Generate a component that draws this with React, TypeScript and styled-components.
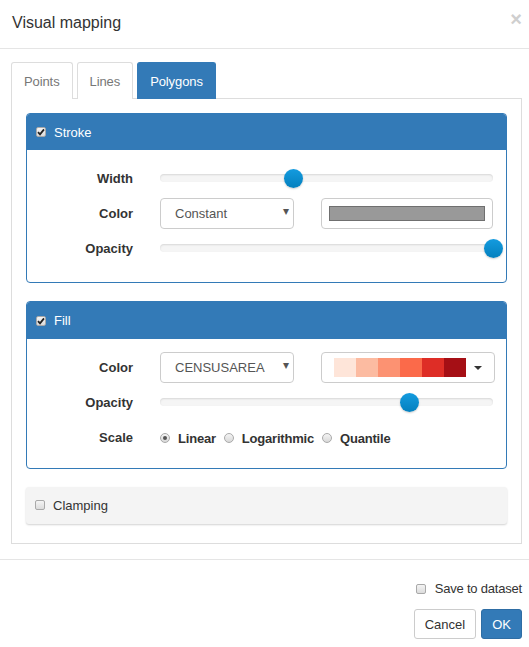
import React, { useState } from "react";
import styled, { createGlobalStyle, css } from "styled-components";

const GlobalStyle = createGlobalStyle`
  html, body {
    margin: 0;
    padding: 0;
    background: #fff;
    font-family: "Liberation Sans", Arial, Helvetica, sans-serif;
    font-size: 13px;
    color: #333;
  }
  * { box-sizing: border-box; }
`;

const ramp = ["#fee5d9", "#fcbba1", "#fc9272", "#fb6a4a", "#de2d26", "#a50f15"];

const Check = ({ checked }: { checked?: boolean }) => (
  <CheckBox>
    {checked && (
      <svg width="8" height="8" viewBox="0 0 8 8">
        <path d="M1 4.2 L3 6.4 L7 1.4" fill="none" stroke="#222" strokeWidth="1.8" />
      </svg>
    )}
  </CheckBox>
);

const Slider = ({ value }: { value: number }) => (
  <Track>
    <Thumb style={{ left: `${value * 100}%` }} />
  </Track>
);

const App = () => {
  const [tab, setTab] = useState("Polygons");
  const [scale, setScale] = useState("Linear");

  return (
    <Modal>
      <GlobalStyle />
      <Header>
        <Title>Visual mapping</Title>
        <Close>×</Close>
      </Header>
      <Body>
        <Tabs>
          {["Points", "Lines", "Polygons"].map((t) => (
            <Tab key={t} $active={tab === t} onClick={() => setTab(t)}>
              {t}
            </Tab>
          ))}
        </Tabs>
        <TabContent>
          <Panel>
            <PanelHeading>
              <Check checked />
              Stroke
            </PanelHeading>
            <PanelBody $pb={19}>
              <Row>
                <Label>Width</Label>
                <Slider value={0.4} />
              </Row>
              <Row>
                <Label>Color</Label>
                <Controls>
                  <Select>
                    Constant
                    <Caret>▾</Caret>
                  </Select>
                  <ColorBox>
                    <Swatch />
                  </ColorBox>
                </Controls>
              </Row>
              <Row>
                <Label>Opacity</Label>
                <Slider value={1} />
              </Row>
            </PanelBody>
          </Panel>

          <Panel>
            <PanelHeading $tall>
              <Check checked />
              Fill
            </PanelHeading>
            <PanelBody $pb={16}>
              <Row>
                <Label>Color</Label>
                <Controls>
                  <Select>
                    CENSUSAREA
                    <Caret>▾</Caret>
                  </Select>
                  <RampBox>
                    <Ramp>
                      {ramp.map((c) => (
                        <RampCell key={c} style={{ background: c }} />
                      ))}
                    </Ramp>
                    <SmallCaret />
                  </RampBox>
                </Controls>
              </Row>
              <Row>
                <Label>Opacity</Label>
                <Slider value={0.75} />
              </Row>
              <Row>
                <Label>Scale</Label>
                <Radios>
                  {["Linear", "Logarithmic", "Quantile"].map((s) => (
                    <RadioLabel key={s} onClick={() => setScale(s)}>
                      <Radio $checked={scale === s} />
                      {s}
                    </RadioLabel>
                  ))}
                </Radios>
              </Row>
            </PanelBody>
          </Panel>

          <DefaultPanel>
            <Check />
            Clamping
          </DefaultPanel>
        </TabContent>
      </Body>
      <Footer>
        <SaveRow>
          <Check />
          Save to dataset
        </SaveRow>
        <Buttons>
          <Button>Cancel</Button>
          <Button $primary>OK</Button>
        </Buttons>
      </Footer>
    </Modal>
  );
};

export default App;

const Modal = styled.div`
  width: 529px;
  min-height: 647px;
  background: #fff;
`;

const Header = styled.div`
  display: flex;
  justify-content: space-between;
  align-items: flex-start;
  height: 49px;
  padding: 12px 7px 0 12px;
  border-bottom: 1px solid #e5e5e5;
`;

const Title = styled.h4`
  margin: 0;
  font-size: 16px;
  font-weight: normal;
  line-height: 22px;
  color: #333;
`;

const Close = styled.span`
  margin-top: -1px;
  font-size: 20px;
  font-weight: bold;
  line-height: 16px;
  color: #cfcfcf;
  cursor: pointer;
`;

const Body = styled.div`
  padding: 13px 7px 15px 11px;
`;

const Tabs = styled.div`
  display: flex;
  gap: 4px;
  margin-bottom: -1px;
`;

const Tab = styled.div<{ $active?: boolean }>`
  ${({ $active }) => css`
    height: 37px;
    padding: 0 12px;
    display: flex;
    align-items: center;
    border: 1px solid ${$active ? "#337ab7" : "#ddd"};
    border-bottom: none;
    border-radius: 3px 3px 0 0;
    background: ${$active ? "#337ab7" : "#fff"};
    color: ${$active ? "#fff" : "#777"};
    font-size: 13px;
    letter-spacing: -0.1px;
    cursor: pointer;
  `}
`;

const TabContent = styled.div`
  display: flex;
  flex-direction: column;
  gap: 18px;
  border: 1px solid #ddd;
  padding: 14px 14px 19px;
`;

const Panel = styled.div`
  border: 1px solid #337ab7;
  border-radius: 4px;
  overflow: hidden;
`;

const PanelHeading = styled.div<{ $tall?: boolean }>`
  display: flex;
  align-items: center;
  gap: 8px;
  height: ${({ $tall }) => ($tall ? 37 : 36)}px;
  padding: 0 9px;
  background: #337ab7;
  color: #fff;
  font-size: 13px;
`;

const DefaultPanel = styled.div`
  display: flex;
  align-items: center;
  gap: 8px;
  height: 37px;
  padding: 0 9px 1px;
  background: #f4f4f4;
  border-radius: 3px;
  box-shadow: 0 1px 2px rgba(0, 0, 0, 0.18);
  color: #333;
  font-size: 13px;
`;

const CheckBox = styled.span`
  display: inline-flex;
  align-items: center;
  justify-content: center;
  width: 10px;
  height: 10px;
  border: 1px solid #a9a9a9;
  border-radius: 2px;
  background: linear-gradient(#f4f4f4, #dcdcdc);
  flex-shrink: 0;
`;

const PanelBody = styled.div<{ $pb: number }>`
  display: flex;
  flex-direction: column;
  gap: 5px;
  padding: 13px 13px ${({ $pb }) => $pb}px 0;
`;

const Row = styled.div`
  display: grid;
  grid-template-columns: 106px 1fr;
  column-gap: 27px;
  align-items: center;
  height: 30px;
`;

const Label = styled.label`
  text-align: right;
  font-weight: bold;
  font-size: 13px;
  color: #333;
`;

const Track = styled.div`
  position: relative;
  height: 8px;
  border-radius: 4px;
  background: #f5f5f5;
  box-shadow: inset 0 1px 2px rgba(0, 0, 0, 0.12);
`;

const Thumb = styled.span`
  position: absolute;
  top: 50%;
  width: 19px;
  height: 19px;
  margin: -9.5px 0 0 -9.5px;
  border-radius: 50%;
  background: linear-gradient(#149bdf, #0480be);
  box-shadow: 0 1px 2px rgba(0, 0, 0, 0.2);
`;

const Controls = styled.div`
  display: grid;
  grid-template-columns: 134px 1fr;
  column-gap: 27px;
`;

const Select = styled.div`
  position: relative;
  height: 31px;
  display: flex;
  align-items: center;
  padding-left: 14px;
  border: 1px solid #ccc;
  border-radius: 4px;
  color: #555;
  font-size: 13px;
`;

const Caret = styled.span`
  position: absolute;
  right: 4px;
  top: 5px;
  font-size: 12px;
  color: #555;
`;

const ColorBox = styled.div`
  height: 31px;
  padding: 7px;
  border: 1px solid #ccc;
  border-radius: 4px;
`;

const Swatch = styled.div`
  height: 100%;
  background: #999;
  border: 1px solid #6f6f6f;
`;

const RampBox = styled.div`
  height: 31px;
  display: flex;
  align-items: center;
  gap: 8px;
  padding: 0 12px;
  border: 1px solid #ccc;
  border-radius: 4px;
`;

const Ramp = styled.div`
  display: flex;
  height: 19px;
`;

const RampCell = styled.span`
  width: 22px;
  height: 100%;
`;

const SmallCaret = styled.span`
  width: 0;
  height: 0;
  border-left: 4px solid transparent;
  border-right: 4px solid transparent;
  border-top: 4px solid #333;
`;

const Radios = styled.div`
  display: flex;
  align-items: center;
  gap: 8px;
  padding-top: 2px;
`;

const RadioLabel = styled.span`
  display: inline-flex;
  align-items: center;
  gap: 8px;
  font-weight: bold;
  font-size: 13px;
  letter-spacing: -0.2px;
  color: #333;
  cursor: pointer;
`;

const Radio = styled.span<{ $checked?: boolean }>`
  position: relative;
  width: 10px;
  height: 10px;
  border: 1px solid #aaa;
  border-radius: 50%;
  background: linear-gradient(#f4f4f4, #d8d8d8);

  ${({ $checked }) =>
    $checked &&
    css`
      &::after {
        content: "";
        position: absolute;
        left: 2px;
        top: 2px;
        width: 4px;
        height: 4px;
        border-radius: 50%;
        background: #555;
      }
    `}
`;

const Footer = styled.div`
  display: flex;
  flex-direction: column;
  align-items: flex-end;
  padding: 19px 7px 0 0;
  border-top: 1px solid #e5e5e5;
`;

const SaveRow = styled.label`
  display: flex;
  align-items: center;
  gap: 9px;
  font-size: 13px;
  line-height: 19px;
  letter-spacing: -0.2px;
  color: #333;
`;

const Buttons = styled.div`
  display: flex;
  gap: 5px;
  margin-top: 11px;
`;

const Button = styled.button<{ $primary?: boolean }>`
  ${({ $primary }) => css`
    height: 30px;
    padding: 0 10px;
    border: 1px solid ${$primary ? "#2e6da4" : "#ccc"};
    border-radius: 3px;
    background: ${$primary ? "#337ab7" : "#fff"};
    color: ${$primary ? "#fff" : "#333"};
    font-family: "Liberation Sans", Arial, sans-serif;
    font-size: 13px;
    cursor: pointer;
  `}
`;
